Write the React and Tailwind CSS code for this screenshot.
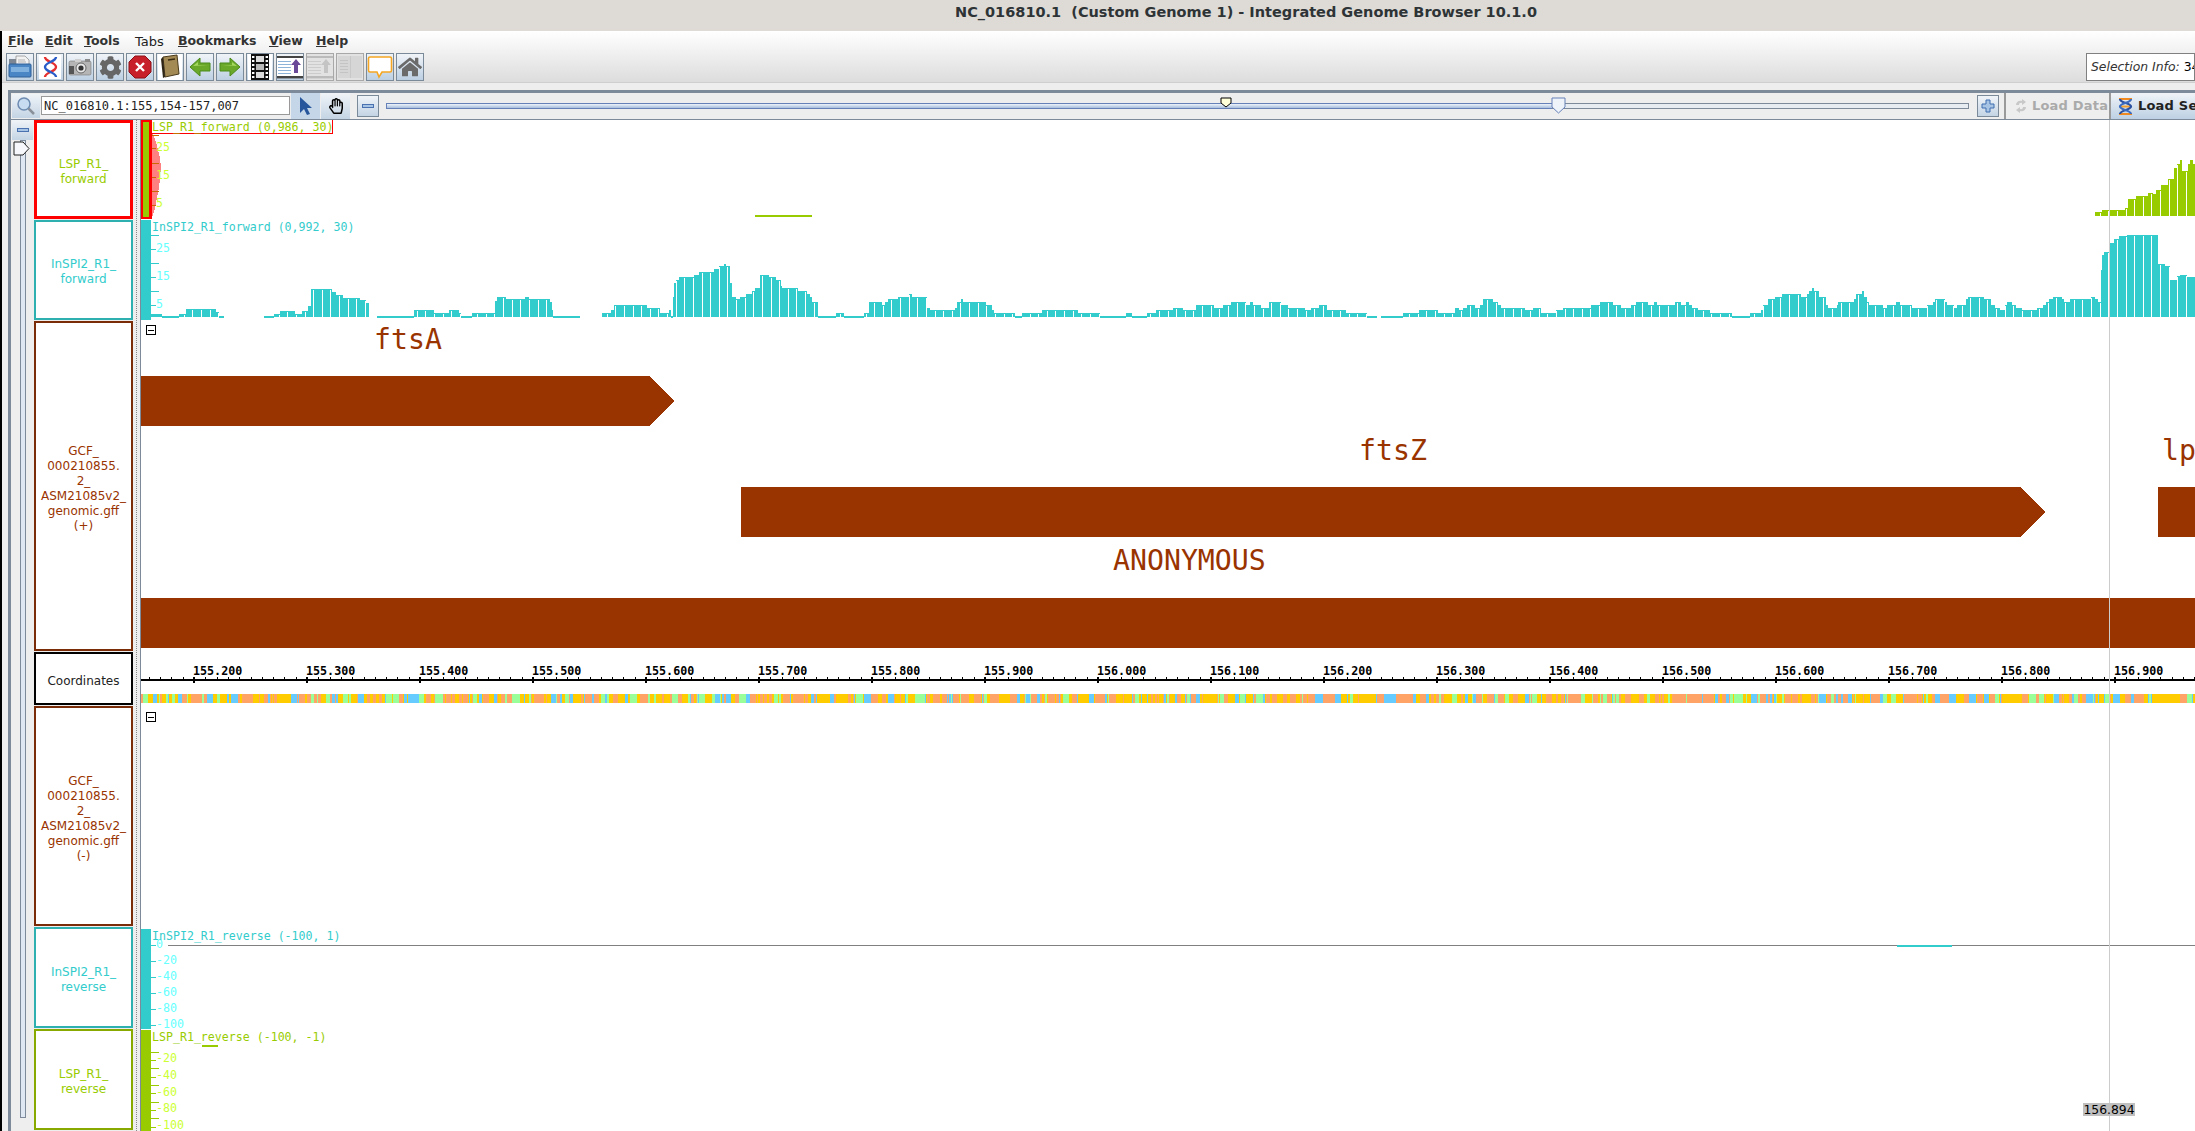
import React from "react";
import { FaCog, FaHome, FaRegHandPaper } from "react-icons/fa";

const teal = [[151,3],[162,1],[179,3],[186,8],[216,5],[219,1],[224,0],[264,1],[274,3],[280,6],[295,3],[302,6],[308,11],[311,28],[332,25],[336,22],[343,19],[360,17],[366,14],[369,0],[377,1],[414,7],[434,4],[449,7],[459,4],[461,1],[472,4],[495,16],[497,20],[506,18],[525,20],[529,18],[550,15],[552,7],[553,1],[580,0],[602,4],[611,7],[614,12],[647,9],[660,4],[669,7],[671,1],[673,20],[674,34],[676,37],[679,40],[694,42],[699,45],[714,48],[719,51],[724,53],[726,51],[730,34],[732,20],[736,18],[740,20],[746,23],[752,26],[755,29],[760,42],[769,40],[776,37],[781,31],[782,29],[798,26],[807,23],[810,20],[812,15],[818,1],[836,4],[844,1],[864,4],[869,15],[882,12],[885,15],[888,18],[898,20],[909,23],[912,20],[927,9],[930,7],[955,9],[957,15],[961,18],[963,15],[986,12],[992,7],[994,4],[1015,1],[1022,4],[1042,7],[1078,4],[1100,1],[1126,4],[1132,1],[1147,4],[1156,7],[1173,9],[1183,7],[1196,12],[1214,9],[1223,12],[1231,15],[1246,12],[1250,15],[1253,12],[1261,9],[1269,15],[1281,12],[1288,9],[1305,7],[1311,9],[1319,12],[1327,7],[1346,4],[1367,1],[1377,0],[1381,1],[1403,4],[1419,7],[1438,4],[1455,9],[1459,7],[1463,9],[1467,12],[1475,9],[1480,12],[1483,18],[1493,15],[1498,12],[1501,9],[1525,7],[1533,9],[1541,4],[1556,7],[1563,9],[1591,12],[1600,15],[1613,12],[1621,9],[1631,12],[1636,15],[1648,12],[1654,15],[1657,12],[1675,15],[1681,12],[1686,15],[1689,12],[1692,9],[1698,7],[1710,4],[1732,1],[1750,4],[1761,7],[1763,12],[1768,18],[1775,20],[1782,23],[1801,20],[1807,23],[1809,26],[1812,29],[1814,26],[1819,20],[1826,12],[1828,9],[1837,12],[1838,15],[1854,18],[1856,23],[1862,26],[1864,20],[1867,15],[1869,12],[1883,9],[1887,12],[1896,15],[1900,12],[1912,9],[1927,12],[1933,15],[1935,18],[1945,15],[1947,12],[1954,9],[1957,12],[1966,18],[1968,20],[1984,18],[1991,12],[1995,9],[2000,7],[2005,12],[2007,15],[2012,12],[2016,9],[2022,7],[2037,9],[2043,12],[2046,15],[2049,18],[2053,20],[2062,18],[2064,15],[2070,18],[2091,20],[2095,18],[2098,15],[2101,47],[2102,62],[2104,65],[2110,74],[2114,78],[2119,81],[2127,82],[2158,53],[2165,51],[2170,37],[2177,41],[2180,42],[2187,40],[2195,0]];
const lime = [[2095,4],[2102,6],[2125,8],[2128,17],[2136,20],[2148,23],[2153,22],[2156,26],[2161,31],[2168,37],[2174,48],[2177,52],[2180,56],[2182,45],[2188,52],[2190,56],[2193,52],[2195,0]];

function barPath(data, base) {
  let d = "";
  for (let i = 0; i < data.length - 1; i++) {
    const [x, h] = data[i];
    const e = data[i + 1][0];
    if (h === 0) continue;
    const top = h === 1 ? base - 1 : base - h;
    const bot = h === 1 ? base + 1 : base;
    d += `M${x} ${top}H${e}V${bot}H${x}Z`;
  }
  return d;
}
function sepPath(data, base) {
  let d = "";
  for (let k = -40; k < 200; k++) {
    const x = Math.round(511.7 + 8.63 * k);
    let h = 0;
    for (let i = 0; i < data.length - 1; i++) {
      if (data[i][0] <= x && x < data[i + 1][0]) h = data[i][1];
    }
    if (h >= 3) d += `M${x} ${base - h + 1}V${base}H${x + 1}V${base - h + 1}Z`;
  }
  return d;
}

function makeStripes() {
  let s = 12345;
  const rnd = () => ((s = (s * 1103515245 + 12345) & 0x7fffffff) / 0x7fffffff);
  const out = [];
  let x = 141;
  const colors = ["#ffcc00", "#ffa366", "#66ccff", "#99ff99"];
  while (x < 2195) {
    const r = rnd();
    const c = r < 0.36 ? 0 : r < 0.72 ? 1 : r < 0.86 ? 2 : 3;
    const w = 1.13 * (1 + Math.floor(rnd() * rnd() * 7));
    out.push([x, w, colors[c]]);
    x += w;
  }
  return out;
}
const stripes = makeStripes();

const mono = "font-['DejaVu_Sans_Mono',monospace]";

function Svg({ top, h, children, className = "" }) {
  return (
    <svg
      className={`absolute left-0 top-0 ${className}`}
      width={2054}
      height={h}
      viewBox={`141 ${top} 2054 ${h}`}
      shapeRendering="crispEdges"
    >
      {children}
    </svg>
  );
}

function AxisText({ x = 15, y, color, children }) {
  return (
    <span
      className={`absolute ${mono} text-[11.6px] leading-[14px] whitespace-pre ${color}`}
      style={{ left: x, top: y - 7 }}
    >
      {children}
    </span>
  );
}

function Ticks({ ys, w, color }) {
  return ys.map((y) => <rect key={y} x="151" y={y} width={w} height="1" fill={color} />);
}

function Heading({ top, color, children }) {
  return (
    <div className={`absolute left-[11px] ${mono} text-[11.6px] leading-[14px] whitespace-pre ${color}`} style={{ top }}>
      {children}
    </div>
  );
}

function Collapse({ top }) {
  return (
    <div className="absolute left-[5px] w-[10px] h-[10px] border border-black bg-white flex items-center justify-center" style={{ top }}>
      <div className="w-[6px] h-px bg-black" />
    </div>
  );
}

function TrackLabel({ h, border, color, lines }) {
  return (
    <div
      className={`w-[99px] mb-px pt-[5px] flex flex-col items-center justify-center bg-white ${border} ${color} font-['DejaVu_Sans',sans-serif] text-[12px] leading-[15px] text-center`}
      style={{ height: h }}
    >
      {lines.map((l) => (
        <span key={l}>{l}</span>
      ))}
    </div>
  );
}

function TBtn({ children, disabled }) {
  return (
    <div
      className={`w-[28px] h-[28px] flex items-center justify-center border ${disabled ? "border-[#a8a8a8] bg-[#e2e2e2]" : "border-[#7a8a99] bg-gradient-to-b from-[#f0f4f8] to-[#bdd0e3]"}`}
    >
      {children}
    </div>
  );
}

const Folder = () => (
  <svg width="24" height="24" viewBox="0 0 24 24">
    <path d="M1 4h8l2 2v4H1z" fill="#7d8794" />
    <path d="M8 1h9l4 4v9H8z" fill="#f2f2f2" stroke="#888" strokeWidth=".7" />
    <path d="M10 5h7M10 7h8" stroke="#999" strokeWidth=".7" />
    <rect x="1" y="9" width="22" height="13" rx="1" fill="#4a86c5" stroke="#2f5e94" />
    <rect x="3" y="12" width="18" height="5" fill="#7fb0de" />
  </svg>
);
const Dna = () => (
  <svg width="24" height="24" viewBox="0 0 24 24">
    <rect x="1" y="0" width="22" height="24" fill="#fff" />
    <path d="M7 2c0 5 11 5 11 10s-11 5-11 10" fill="none" stroke="#e53030" strokeWidth="2.4" />
    <path d="M18 2c0 5-11 5-11 10s11 5 11 10" fill="none" stroke="#2a5cc8" strokeWidth="2.4" />
  </svg>
);
const DnaSmall = () => (
  <svg className="shrink-0" width="15" height="17" viewBox="0 0 15 17">
    <rect x="1" y="0" width="13" height="2" fill="#f08a20" />
    <rect x="1" y="15" width="13" height="2" fill="#f08a20" />
    <rect x="3" y="7.500" width="9" height="2" fill="#f0a030" />
    <path d="M2 1c0 4 11 4 11 7.500S2 12 2 16" fill="none" stroke="#2a50a0" strokeWidth="2.2" />
    <path d="M13 1c0 4-11 4-11 7.500S13 12 13 16" fill="none" stroke="#3c6cc0" strokeWidth="2.2" />
  </svg>
);
const Camera = () => (
  <svg width="24" height="24" viewBox="0 0 24 24">
    <rect x="1" y="6" width="22" height="14" rx="1.5" fill="#b5b5b5" stroke="#777" strokeWidth=".6" />
    <rect x="1" y="11" width="5" height="8" fill="#555" />
    <rect x="7" y="4" width="6" height="3" fill="#d0d0d0" />
    <rect x="17" y="4" width="5" height="3" fill="#8a8a8a" />
    <circle cx="13" cy="13" r="5" fill="#e8e8e8" stroke="#666" />
    <circle cx="13" cy="13" r="2.6" fill="#333" />
  </svg>
);
const Stop = () => (
  <svg width="24" height="24" viewBox="0 0 24 24">
    <path d="M7 1h10l6 6v10l-6 6H7l-6-6V7z" fill="#c8202a" stroke="#8c1016" />
    <path d="M8 8l8 8M16 8l-8 8" stroke="#fff" strokeWidth="2.4" />
  </svg>
);
const Book = () => (
  <svg width="26" height="26" viewBox="0 0 26 26">
    <rect x="1" y="0" width="24" height="26" fill="#fff" />
    <path d="M6 3l14-2 2 19-14 3z" fill="#a38a55" stroke="#4a3a1c" />
    <path d="M6 3l2 20-2 1-2-19z" fill="#2e2414" />
    <path d="M11 6l7-1" stroke="#3a2c10" strokeWidth="1.5" />
  </svg>
);
const GreenArrow = ({ right }) => (
  <svg width="22" height="22" viewBox="0 0 22 22">
    <path
      d={right ? "M1 7h10V2l10 9-10 9v-5H1z" : "M21 7H11V2L1 11l10 9v-5h10z"}
      fill="#6aa82a"
      stroke="#4b8a1a"
    />
    <path d={right ? "M3 9h10V6l5 4z" : "M19 9H9V6l-5 4z"} fill="#a4d85e" />
  </svg>
);
const Film = () => (
  <svg width="24" height="26" viewBox="0 0 24 26">
    <rect x="0" y="0" width="24" height="26" fill="#fff" />
    <rect x="3" y="0" width="18" height="26" fill="#111" />
    <rect x="8" y="2" width="8" height="6" fill="#ddd" />
    <rect x="8" y="10" width="8" height="6" fill="#bbb" />
    <rect x="8" y="18" width="8" height="6" fill="#ddd" />
    {[2, 6, 10, 14, 18, 22].map((y) => (
      <g key={y}>
        <rect x="4" y={y} width="2.4" height="2" fill="#fff" />
        <rect x="17.6" y={y} width="2.4" height="2" fill="#fff" />
      </g>
    ))}
  </svg>
);
const Lines = ({ off }) => (
  <svg width="26" height="26" viewBox="0 0 26 26">
    {!off && <rect x="0" y="2" width="26" height="22" fill="#fff" />}
    <rect x="0" y="2" width="26" height="2" fill={off ? "#bbb" : "#444"} />
    <rect x="0" y="22" width="26" height="2.4" fill={off ? "#bbb" : "#444"} />
    {[7, 10, 13, 16, 19].map((y) => (
      <rect key={y} x="1" y={y} width="13" height="1" fill={off ? "#ccc" : "#8db4d8"} />
    ))}
    <path d="M19 5l5 6h-3v8h-4v-8h-3z" fill={off ? "#c4c4c4" : "#6a4a98"} />
  </svg>
);
const OffBook = () => (
  <svg width="26" height="26" viewBox="0 0 26 26">
    <rect x="1" y="2" width="24" height="22" fill="#d6d6d6" />
    <rect x="13" y="2" width="1" height="22" fill="#c8c8c8" />
    {[6, 9, 12, 15, 18].map((y) => (
      <rect key={y} x="3" y={y} width="8" height="1" fill="#c4c4c4" />
    ))}
  </svg>
);
const Bubble = () => (
  <svg width="26" height="24" viewBox="0 0 26 24">
    <path d="M3 2h20a1.500 1.500 0 0 1 1.500 1.500v12A1.500 1.500 0 0 1 23 17h-8l-3 5-2-5H3a1.500 1.500 0 0 1-1.500-1.500v-12A1.500 1.500 0 0 1 3 2z" fill="#fff" stroke="#f5a623" strokeWidth="1.6" />
  </svg>
);
const Magnifier = () => (
  <svg width="20" height="20" viewBox="0 0 20 20">
    <circle cx="8" cy="8" r="6" fill="#c7dcf0" stroke="#6d8bb0" strokeWidth="1.5" />
    <path d="M12.500 12.500L18 18" stroke="#8a9099" strokeWidth="2.5" />
  </svg>
);
const Arrow = () => (
  <svg width="16" height="20" viewBox="0 0 16 20">
    <path d="M2 1v16l4-4 3 6 3-1-3-6h5z" fill="#27569c" />
  </svg>
);
const Refresh = () => (
  <svg className="shrink-0" width="14" height="16" viewBox="0 0 14 16">
    <path d="M2 7c0-3 3-5 6-4V1l4 3-4 3V5c-2-.500-3 .500-3 2z" fill="#c8c8c8" />
    <path d="M12 9c0 3-3 5-6 4v2L2 12l4-3v2c2 .500 3-.500 3-2z" fill="#c8c8c8" />
  </svg>
);

const Underlined = ({ c, rest }) => (
  <>
    <span className="underline">{c}</span>
    {rest}
  </>
);

export default function App() {
  const xticks = Array.from({ length: 18 }, (_, i) => i);
  const minor = Array.from({ length: 190 }, (_, i) => i);
  return (
    <div className="w-[2195px] h-[1131px] overflow-hidden bg-[#eeeeee] flex flex-col font-['DejaVu_Sans',sans-serif]">
      <div className="h-[31px] shrink-0 bg-[#dedbd7] flex items-center pl-[955px] pb-[6px] text-[#2e3436] font-bold text-[14.500px] whitespace-pre">
        NC_016810.1  (Custom Genome 1) - Integrated Genome Browser 10.1.0
      </div>
      <div className="flex-1 min-h-0 flex flex-col border-l-2 border-black">
        <div className="h-[52px] shrink-0 bg-gradient-to-b from-white to-[#dcdcdc] flex flex-col">
          <div className="h-[21px] flex items-center pl-[6px] text-[12.500px] font-bold text-[#333]">
            <span className="w-[37px]"><Underlined c="F" rest="ile" /></span>
            <span className="w-[39px]"><Underlined c="E" rest="dit" /></span>
            <span className="w-[51px]"><Underlined c="T" rest="ools" /></span>
            <span className="w-[43px] font-normal text-[13px] text-[#222]">Tabs</span>
            <span className="w-[91px]"><Underlined c="B" rest="ookmarks" /></span>
            <span className="w-[47px]"><Underlined c="V" rest="iew" /></span>
            <span><Underlined c="H" rest="elp" /></span>
          </div>
          <div className="flex-1 flex items-start justify-between pl-[4px]">
            <div className="flex gap-[2px] mt-px">
              <TBtn><Folder /></TBtn>
              <TBtn><Dna /></TBtn>
              <TBtn><Camera /></TBtn>
              <TBtn><FaCog className="text-[#666] w-[23px] h-[23px]" /></TBtn>
              <TBtn><Stop /></TBtn>
              <TBtn><Book /></TBtn>
              <TBtn><GreenArrow /></TBtn>
              <TBtn><GreenArrow right /></TBtn>
              <TBtn><Film /></TBtn>
              <TBtn><Lines /></TBtn>
              <TBtn disabled><Lines off /></TBtn>
              <TBtn disabled><OffBook /></TBtn>
              <TBtn><Bubble /></TBtn>
              <TBtn><FaHome className="text-[#6b6b6b] w-[24px] h-[24px]" /></TBtn>
            </div>
            <div className="w-[109px] h-[28px] mt-px border border-[#808080] bg-white flex items-center pl-[4px] text-[12.400px] whitespace-nowrap overflow-hidden text-[#333]">
              <span className="italic">Selection Info:</span>&nbsp;<span className="text-black">34</span>
            </div>
          </div>
        </div>
        <div className="h-px shrink-0 bg-[#cfcfcf] mt-[-1px]" />
        <div className="h-[7px] shrink-0" />
        <div className="flex-1 min-h-0 ml-[6px] flex flex-col border-t-[3px] border-l-[3px] border-[#7c8a99]">
          <div className="h-[27px] shrink-0 flex items-stretch border-b border-[#7c8a99] pl-px">
            <div className="w-[28px] h-[24px] mt-px flex items-center justify-center bg-gradient-to-b from-[#f0f4f8] to-[#c4d4e4]">
              <Magnifier />
            </div>
            <div className={`w-[249px] h-[19px] mt-[3px] ml-px bg-white border border-[#999] flex items-center pl-[2px] ${mono} text-[12px] text-[#222] whitespace-pre`}>
              NC_016810.1:155,154-157,007
            </div>
            <div className="w-[29px] ml-px flex items-center justify-center bg-[#c4d6e8]">
              <Arrow />
            </div>
            <div className="w-[29px] ml-px flex items-center justify-center bg-gradient-to-b from-[#f0f4f8] to-[#c4d4e4]">
              <FaRegHandPaper className="w-[16px] h-[16px] text-black" />
            </div>
            <div className="w-[22px] h-[22px] mt-[2px] ml-[7px] border border-[#7a8a99] bg-gradient-to-b from-[#f0f4f8] to-[#c4d4e4] flex items-center justify-center">
              <div className="w-[12px] h-[4px] bg-[#a8c4e4] border border-[#4a72b0]" />
            </div>
            <div className="relative w-[1583px] ml-[7px]">
              <div className="absolute left-0 top-[10px] w-full h-[6px] border border-[#7c8a99] bg-[#e6ecf2]" />
              <div className="absolute left-0 top-[10px] w-[1166px] h-[6px] border-y border-l border-[#6680b8] bg-gradient-to-b from-[#eef3fa] to-[#a8bedd]" />
              <svg className="absolute left-[834px] top-[4px]" width="12" height="11" viewBox="0 0 12 11">
                <path d="M1 1h10v5l-5 4-5-4z" fill="#ffffd8" stroke="#000" />
              </svg>
              <svg className="absolute left-[1165px] top-[4px]" width="15" height="17" viewBox="0 0 15 17">
                <path d="M1 1h13v9l-6.500 6L1 10z" fill="#eef3fa" stroke="#6680b8" />
              </svg>
            </div>
            <div className="w-[22px] h-[22px] mt-[2px] ml-[8px] border border-[#7a8a99] bg-gradient-to-b from-[#f0f4f8] to-[#c4d4e4] flex items-center justify-center">
              <svg width="14" height="14" viewBox="0 0 14 14">
                <path d="M5 1h4v4h4v4H9v4H5V9H1V5h4z" fill="#a8c4e4" stroke="#3f6fb0" />
              </svg>
            </div>
            <div className="w-[107px] ml-[5px] border-x-2 border-[#9a9a9a] flex items-center pl-[8px] gap-[4px] text-[13px] font-bold text-[#aaaaaa] tracking-[0.2px] whitespace-nowrap overflow-hidden">
              <Refresh />
              Load Data
            </div>
            <div className="flex-1 overflow-hidden flex items-center pl-[7px] gap-[5px] bg-gradient-to-b from-[#f0f4f8] to-[#bdd0e3] text-[13px] font-bold text-[#222] tracking-[0.2px] whitespace-nowrap">
              <DnaSmall />
              Load Sequence
            </div>
          </div>
          <div className="flex-1 min-h-0 flex">
            <div className="w-[22px] shrink-0 flex flex-col items-center relative pl-px">
              <div className="w-[21px] h-[20px] shrink-0 bg-gradient-to-b from-[#f0f4f8] to-[#c4d4e4] flex items-center justify-center">
                <div className="w-[12px] h-[4px] bg-[#a8c4e4] border border-[#4a72b0]" />
              </div>
              <div className="w-[6px] h-[978px] border border-[#7c8a99] bg-[#dfe8f2]" />
              <svg className="absolute left-[2px] top-[21px]" width="17" height="15" viewBox="0 0 17 15">
                <path d="M1 1h9l6 6.500-6 6.500H1z" fill="#f6f8fb" stroke="#222" />
              </svg>
            </div>
            <div className="w-[100px] shrink-0 pl-px flex flex-col">
              <TrackLabel h={99} border="border-[3px] border-[#ff0000]" color="text-[#99cc00]" lines={["LSP_R1_", "forward"]} />
              <TrackLabel h={100} border="border-2 border-[#2fb0b0]" color="text-[#33cccc]" lines={["InSPI2_R1_", "forward"]} />
              <TrackLabel h={331} border="border-2 border-[#7a2c08]" color="text-[#993300]" lines={["GCF_", "000210855.", "2_", "ASM21085v2_", "genomic.gff", "(+)"]} />
              <TrackLabel h={53} border="border-2 border-black" color="text-[#222]" lines={["Coordinates"]} />
              <TrackLabel h={220} border="border-2 border-[#7a2c08]" color="text-[#993300]" lines={["GCF_", "000210855.", "2_", "ASM21085v2_", "genomic.gff", "(-)"]} />
              <TrackLabel h={101} border="border-2 border-[#2fb0b0]" color="text-[#33cccc]" lines={["InSPI2_R1_", "reverse"]} />
              <TrackLabel h={101} border="border-2 border-[#88aa00]" color="text-[#99cc00]" lines={["LSP_R1_", "reverse"]} />
            </div>
            <div className="w-[8px] shrink-0 flex justify-center border-r border-[#7c8a99] pr-px">
              <div className="w-px h-full border-l border-dotted border-[#888]" />
            </div>
            <div className="flex-1 min-w-0 relative bg-white overflow-hidden flex flex-col">
              {/* LSP forward */}
              <div className="relative h-[100px] shrink-0">
                <Svg top={120} h={100}>
                  <path d="M152 133L154 136L156 142L158 150L160 158L161 167L160 178L159 188L157 198L155 208L153 215L152 218Z" fill="#ff8080" />
                  <Ticks ys={[135, 163, 191]} w={8} color="#cc6600" />
                  <Ticks ys={[148, 177, 205]} w={5} color="#cc6600" />
                  <path d={barPath(lime, 216)} fill="#99cc00" />
                  <path d={sepPath(lime, 216)} fill="#fff" />
                  <rect x="755" y="215" width="57" height="2" fill="#99cc00" />
                </Svg>
                <div className="absolute left-0 top-0 w-[11px] h-[99px] border-2 border-r-[3px] border-[#ff0000] bg-[#99cc00]" />
                <AxisText y={27} color="text-[#ccff33]">25</AxisText>
                <AxisText y={55} color="text-[#ccff33]">15</AxisText>
                <AxisText y={83} color="text-[#ccff33]">5</AxisText>
                <div className={`absolute left-[11px] top-0 h-[14px] w-[181px] border-b border-r border-[#ff0000] ${mono} text-[11.6px] leading-[14px] text-[#99cc00] whitespace-pre`}>
                  LSP_R1_forward (0,986, 30)
                </div>
              </div>
              {/* InSPI forward */}
              <div className="relative h-[101px] shrink-0">
                <Svg top={220} h={101}>
                  <rect x="141" y="220" width="10" height="100" fill="#33cccc" />
                  <Ticks ys={[235, 263, 291]} w={8} color="#33cccc" />
                  <Ticks ys={[249, 277, 305]} w={5} color="#33cccc" />
                  <path d={barPath(teal, 317)} fill="#33cccc" />
                  <path d={sepPath(teal, 317)} fill="#fff" />
                </Svg>
                <AxisText y={28} color="text-[#66ffff]">25</AxisText>
                <AxisText y={56} color="text-[#66ffff]">15</AxisText>
                <AxisText y={84} color="text-[#66ffff]">5</AxisText>
                <Heading top={0} color="text-[#33cccc]">InSPI2_R1_forward (0,992, 30)</Heading>
              </div>
              {/* GFF + */}
              <div className="relative h-[332px] shrink-0">
                <Svg top={321} h={332}>
                  <path d="M141 376H650L674 401L650 426H141Z" fill="#993300" />
                  <path d="M741 487H2020L2045 512L2020 537H741Z" fill="#993300" />
                  <rect x="2158" y="487" width="37" height="50" fill="#993300" />
                  <rect x="141" y="598" width="2054" height="50" fill="#993300" />
                </Svg>
                <Collapse top={4} />
                <span className={`absolute left-[233px] top-[5px] ${mono} text-[28.200px] leading-[28px] text-[#993300]`}>ftsA</span>
                <span className={`absolute left-[1218px] top-[116px] ${mono} text-[28.200px] leading-[28px] text-[#993300]`}>ftsZ</span>
                <span className={`absolute left-[2021px] top-[116px] ${mono} text-[28.200px] leading-[28px] text-[#993300]`}>lp</span>
                <span className={`absolute left-[972px] top-[226px] ${mono} text-[28.200px] leading-[28px] text-[#993300]`}>ANONYMOUS</span>
              </div>
              {/* Coordinates */}
              <div className="relative h-[54px] shrink-0">
                <Svg top={653} h={54}>
                  <rect x="141" y="679" width="2054" height="2" fill="#000" />
                  {minor.map((i) => (
                    <rect key={i} x={Math.round(148.800 + 11.3 * i)} y="677" width="1" height="2" fill="#000" />
                  ))}
                  {xticks.map((i) => (
                    <rect key={i} x={Math.round(193 + 113 * i)} y="677" width="2" height="6" fill="#000" />
                  ))}
                  {stripes.map(([x, w, c]) => (
                    <rect key={x} x={x} y="694" width={w} height="9" fill={c} />
                  ))}
                </Svg>
                {xticks.map((i) => (
                  <span
                    key={i}
                    className={`absolute top-[11px] ${mono} font-bold text-[11.7px] leading-[14px] text-black`}
                    style={{ left: 52 + 113 * i }}
                  >
                    {(155.2 + i * 0.1).toFixed(3)}
                  </span>
                ))}
              </div>
              {/* GFF - */}
              <div className="relative h-[221px] shrink-0">
                <Collapse top={5} />
              </div>
              {/* InSPI reverse */}
              <div className="relative h-[102px] shrink-0">
                <Svg top={928} h={102}>
                  <rect x="168" y="945" width="2027" height="1" fill="#808080" />
                  <rect x="1897" y="945" width="55" height="2" fill="#33cccc" />
                  <rect x="141" y="929" width="10" height="100" fill="#33cccc" />
                  <Ticks ys={[945, 961, 977, 993, 1009, 1025]} w={5} color="#33cccc" />
                </Svg>
                {[["0", 16], ["-20", 32], ["-40", 48], ["-60", 64], ["-80", 80], ["-100", 96]].map(([t, y]) => (
                  <AxisText key={t} y={y} color="text-[#66ffff]">{t}</AxisText>
                ))}
                <Heading top={1} color="text-[#33cccc]">InSPI2_R1_reverse (-100, 1)</Heading>
              </div>
              {/* LSP reverse */}
              <div className="relative h-[101px] shrink-0">
                <Svg top={1030} h={101}>
                  <rect x="141" y="1030" width="10" height="101" fill="#99cc00" />
                  <rect x="202" y="1045" width="16" height="2" fill="#99cc00" />
                  <Ticks ys={[1052, 1068, 1085, 1102, 1118]} w={8} color="#99cc00" />
                  <Ticks ys={[1060, 1077, 1093, 1110, 1127]} w={5} color="#99cc00" />
                </Svg>
                {[["-20", 28], ["-40", 45], ["-60", 62], ["-80", 78], ["-100", 95]].map(([t, y]) => (
                  <AxisText key={t} y={y} color="text-[#ccff33]">{t}</AxisText>
                ))}
                <Heading top={0} color="text-[#99cc00]">LSP_R1_reverse (-100, -1)</Heading>
              </div>
              {/* hairline */}
              <div className="absolute left-[1968px] top-0 bottom-0 w-px bg-[#cccccc]" />
              <div className="absolute left-[1942px] top-[983px] h-[13px] w-[52px] bg-[#c0c0c0] text-[12.400px] leading-[13px] text-black text-center">
                156.894
              </div>
            </div>
          </div>
        </div>
      </div>
    </div>
  );
}
